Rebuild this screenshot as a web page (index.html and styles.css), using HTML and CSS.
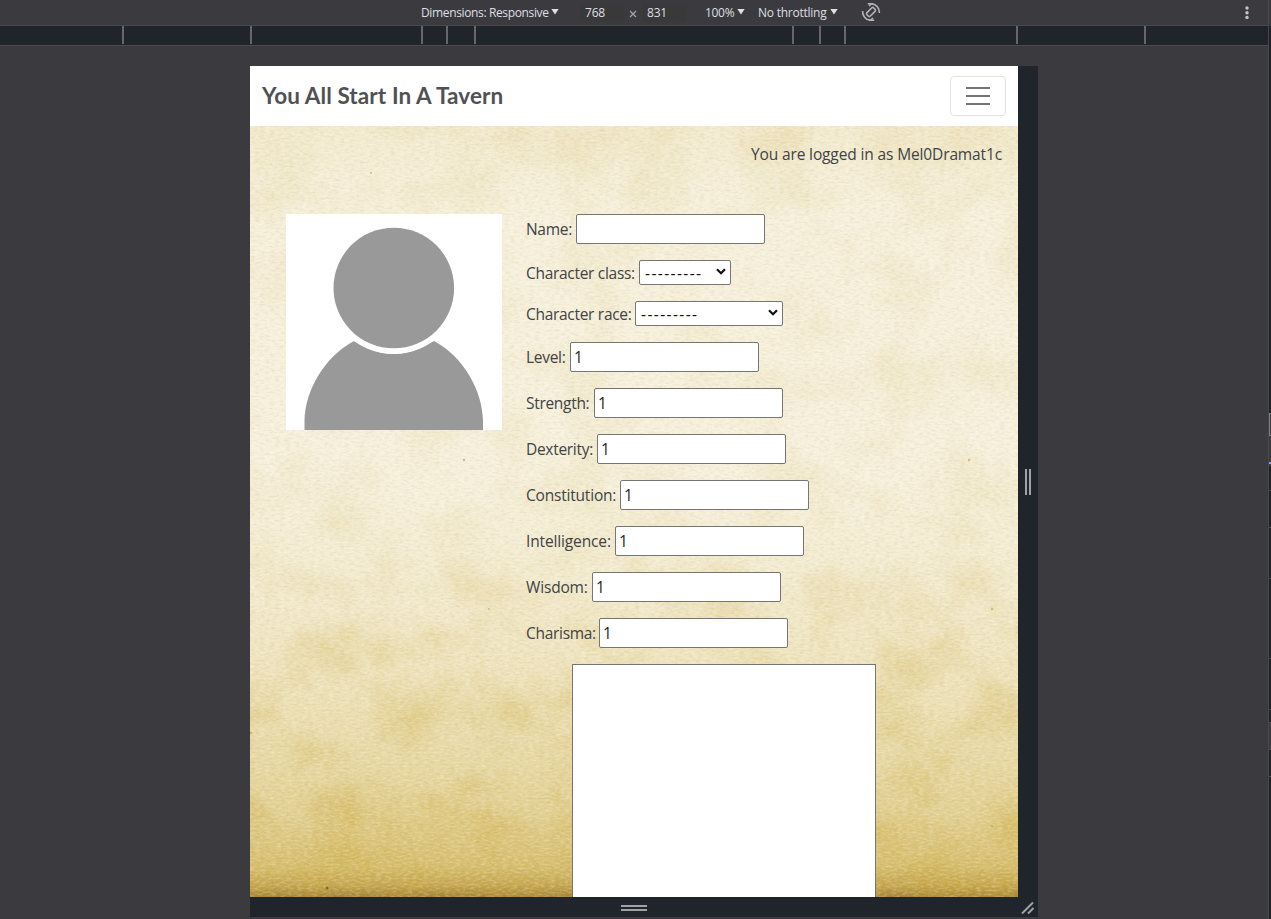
FILE: index.html
```html
<!DOCTYPE html>
<html lang="en">
<head>
<meta charset="utf-8">
<title>You All Start In A Tavern</title>
<link rel="stylesheet" href="styles.css">
</head>
<body>
<div class="device-tools">
  <header class="toolbar">
    <span class="tool dimensions">Dimensions: Responsive</span><i class="caret"></i>
    <span class="size size-w">768</span>
    <svg class="times" viewBox="0 0 8 8"><path d="M1 1l6 6M7 1L1 7"/></svg>
    <span class="size size-h">831</span>
    <span class="tool zoom">100%</span><i class="caret"></i>
    <span class="tool throttle">No throttling</span><i class="caret"></i>
    <svg class="rotate" viewBox="0 0 20 20"><g transform="rotate(45 10 10)"><rect x="7.600" y="5.200" width="4.800" height="9.600" rx="1.500"/></g><path d="M1.600 9c-.2 4.500 3 8.800 7.600 9.300M18.400 11c.2-4.500-3-8.800-7.600-9.300"/><path d="M6.800 1.800h5.200M8 18.200h5.200M8 4l3-2.500M12 16l-3 2.500"/></svg>
    <svg class="more" viewBox="0 0 4 14"><circle cx="2" cy="2" r="1.700"/><circle cx="2" cy="6.700" r="1.700"/><circle cx="2" cy="11.400" r="1.700"/></svg>
  </header>
  <svg class="ruler" viewBox="0 0 1268 19"><path d="M123 0v18M251 0v18M422 0v18M447 0v18M475 0v18M793 0v18M820 0v18M845 0v18M1017 0v18M1145 0v18"/></svg>
  <div class="stage">
    <div class="viewport">
      <nav class="navbar">
        <span class="brand">You All Start In A Tavern</span>
        <button class="menu" aria-label="Menu"><i></i><i></i><i></i></button>
      </nav>
      <main class="parchment">
        <svg class="paper" width="768" height="771" preserveAspectRatio="none">
          <defs>
            <linearGradient id="tone" x1="0" y1="0" x2="0" y2="1">
              <stop offset="0" stop-color="#f3ebd0"/><stop offset=".12" stop-color="#f7f1de"/><stop offset=".45" stop-color="#f7f1de"/><stop offset=".6" stop-color="#f3ebcf"/><stop offset=".76" stop-color="#ecdfb3"/><stop offset=".89" stop-color="#e2d092"/><stop offset=".96" stop-color="#d6bd6c"/><stop offset=".985" stop-color="#c5a64f"/><stop offset="1" stop-color="#a38234"/>
            </linearGradient>
            <linearGradient id="fade" x1="0" y1="0" x2="0" y2="1">
              <stop offset="0" stop-color="#555"/><stop offset=".15" stop-color="#333"/><stop offset=".5" stop-color="#3a3a3a"/><stop offset=".9" stop-color="#ddd"/>
            </linearGradient>
            <mask id="age"><rect width="768" height="771" fill="url(#fade)"/></mask>
            <filter id="grain" x="0" y="0" width="100%" height="100%" color-interpolation-filters="sRGB">
              <feTurbulence type="fractalNoise" baseFrequency=".2 .5" numOctaves="3" seed="6"/>
              <feColorMatrix values="0 0 0 0 .64  0 0 0 0 .51  0 0 0 0 .22  1.500 0 0 0 -.61"/>
            </filter>
            <filter id="light" x="0" y="0" width="100%" height="100%" color-interpolation-filters="sRGB">
              <feTurbulence type="fractalNoise" baseFrequency=".19 .5" numOctaves="3" seed="18"/>
              <feColorMatrix values="0 0 0 0 1  0 0 0 0 1  0 0 0 0 .95  1.800 0 0 0 -.72"/>
            </filter>
            <filter id="stains" x="0" y="0" width="100%" height="100%" color-interpolation-filters="sRGB">
              <feTurbulence type="fractalNoise" baseFrequency=".016 .018" numOctaves="6" seed="23"/>
              <feColorMatrix values="0 0 0 0 .8  0 0 0 0 .67  0 0 0 0 .25  1.900 0 0 0 -.8"/>
            </filter>
          </defs>
          <rect width="768" height="771" fill="url(#tone)"/>
          <g mask="url(#age)"><rect width="768" height="771" filter="url(#stains)" opacity=".6"/></g>
          <rect width="768" height="771" filter="url(#grain)" opacity=".18"/>
          <rect width="768" height="771" filter="url(#light)" opacity=".35"/>
          <g fill="#caa94a" opacity=".7"><circle cx="121" cy="47" r="1"/><circle cx="214" cy="334" r="1.300"/><circle cx="719" cy="334" r="1.300"/><circle cx="742" cy="483" r="1.200"/><circle cx="742" cy="700" r="1.300"/><circle cx="1" cy="607" r="1.500"/><circle cx="239" cy="483" r="1"/><circle cx="495" cy="699" r="1.200"/><circle cx="77" cy="762" r="1.500" fill="#71521c"/></g>
        </svg>
        <div class="content">
          <p class="login">You are logged in as Mel0Dramat1c</p>
          <div class="columns">
            <svg class="avatar" viewBox="0 0 216 216"><rect width="216" height="216" fill="#fff"/><path d="M18.500 216V207C19 177 38 143 68 127Q108 153 148 127C178 143 196.500 177 197 207V216Z" fill="#999"/><circle cx="107.500" cy="74" r="66" fill="#fff"/><circle cx="107.800" cy="74" r="60.300" fill="#999"/></svg>
            <form class="sheet">
              <label class="row name"><span>Name:</span><input type="text"></label>
              <label class="row class"><span>Character class:</span><div class="select"><b>---------</b><svg viewBox="0 0 10 7"><path d="M1 1.200l4 4 4-4"/></svg></div></label>
              <label class="row race"><span>Character race:</span><div class="select"><b>---------</b><svg viewBox="0 0 10 7"><path d="M1 1.200l4 4 4-4"/></svg></div></label>
              <label class="row level"><span>Level:</span><input type="text" value="1"></label>
              <label class="row strength"><span>Strength:</span><input type="text" value="1"></label>
              <label class="row dexterity"><span>Dexterity:</span><input type="text" value="1"></label>
              <label class="row constitution"><span>Constitution:</span><input type="text" value="1"></label>
              <label class="row intelligence"><span>Intelligence:</span><input type="text" value="1"></label>
              <label class="row wisdom"><span>Wisdom:</span><input type="text" value="1"></label>
              <label class="row charisma"><span>Charisma:</span><input type="text" value="1"></label>
              <textarea class="story"></textarea>
            </form>
          </div>
        </div>
      </main>
    </div>
    <div class="rail rail-right"><svg viewBox="0 0 6 26" width="6" height="26"><path d="M1 0v26M5 0v26"/></svg></div>
    <div class="rail rail-bottom"><svg viewBox="0 0 26 6" width="26" height="6"><path d="M0 1h26M0 5h26"/></svg></div>
    <div class="rail corner"><svg viewBox="0 0 14 14" width="14" height="14"><path d="M1 12.500L12 1.500M7 12.500l5.500-5.500"/></svg></div>
  </div>
  <svg class="edge" viewBox="0 0 3 919"><path d="M1 26h2v893H1z" fill="#202124"/><path d="M0 0h1v919H0z" fill="#48484c"/><path d="M1 413h2v53H1zM1 722h2v28H1z" fill="#3b3b3f"/><path d="M1 413.500h2M1.500 413v23M1 435.500h2" stroke="#808084" fill="none"/><path d="M1 490.500h2M1 527.500h2M1 578.500h2M1 658.500h2M1 709.500h2M1 722.500h2M1 749.500h2M1 776.500h2" stroke="#4b4b4f"/><path d="M1 462h2v2H1z" fill="#7da7e8"/></svg>
</div>
</body>
</html>
```
FILE: styles.css
```css
* { box-sizing: border-box; }
body { margin: 0; overflow: hidden; background: #3b3b3f; font-family: "Open Sans", "Noto Sans", sans-serif; }
svg { display: block; flex: none; }
.device-tools { display: grid; grid-template: 26px 20px 873px / 1268px 3px; width: 1271px; height: 919px; }
.toolbar { display: flex; align-items: center; padding-left: 421px; border-bottom: 1px solid #4a4a4d; color: #dedfe2; font-size: 12px; white-space: nowrap; }
.edge { grid-column: 2; grid-row: 1 / 4; width: 3px; height: 919px; }
.tool { flex: none; }
.dimensions { width: 130px; letter-spacing: -.36px; }
.zoom { width: 32px; letter-spacing: -.3px; }
.throttle { width: 72px; letter-spacing: -.24px; }
.caret { flex: none; width: 8px; height: 6px; margin-top: -2px; background: #dedfe2; clip-path: polygon(0 0, 100% 0, 50% 100%); }
.size { flex: none; height: 18px; line-height: 18px; background: #3a3939; letter-spacing: -.2px; }
.size-w { width: 44px; margin-left: 21px; padding-left: 5px; }
.times { width: 8px; height: 8px; margin: 3px 5px 0; stroke: #a5a7aa; stroke-width: 1.2; }
.size-h { width: 45px; padding-left: 5px; margin-right: 18px; }
.toolbar .throttle { margin-left: 13px; }
.rotate { width: 20px; height: 20px; margin: -1px 0 0 23px; fill: none; stroke: #b4b5b8; stroke-width: 1.6; }
.more { width: 4px; height: 14px; margin: 0 19px 0 auto; fill: #c5c6c9; }
.ruler { width: 1268px; height: 20px; background: #20242b; border-bottom: 1px solid #4a4a4d; stroke: #66676a; stroke-width: 2; }
.stage { display: grid; grid-template: 831px 20px / 768px 20px; padding: 20px 0 0 250px; align-content: start; }
.viewport { width: 768px; height: 831px; overflow: hidden; }
.navbar { display: flex; align-items: center; justify-content: space-between; height: 60px; padding: 0 12px; background: #fff; }
.brand { color: #505154; font: 700 22.5px/30px Lato, sans-serif; letter-spacing: .1px; }
.menu { display: flex; flex-direction: column; align-items: center; justify-content: center; gap: 6px; width: 56px; height: 40px; padding: 0; border: 1px solid #e3e3e3; border-radius: 4px; background: #fff; }
.menu i { width: 24px; height: 2px; background: #747474; }
.parchment { display: grid; height: 771px; overflow: hidden; }
.paper, .content { grid-area: 1 / 1; }
.content { z-index: 1; padding: 16px 16px 0 36px; color: #3e4346; font-size: 15.5px; font-weight: 400; line-height: 24px; letter-spacing: -.3px; }
.login { margin: 0 0 48px; text-align: right; letter-spacing: -.13px; }
.columns { display: flex; gap: 24px; }
.avatar { width: 216px; height: 216px; }
.sheet { display: flex; flex-direction: column; gap: 16px; }
.row { display: flex; height: 30px; white-space: nowrap; line-height: 31px; }
.row span { flex: none; }
.row input { width: 189px; height: 30px; padding: 1px 3px; border: 1px solid #767676; border-radius: 2px; background: #fff; color: #222; font: inherit; outline: 0; }
.row.class, .row.race { height: 25px; line-height: 26px; }
.select { display: flex; align-items: center; justify-content: space-between; height: 25px; padding: 0 4px 0 5px; border: 1px solid #767676; border-radius: 2px; background: #fff; color: #111; }
.select b { font-weight: 400; letter-spacing: 1.4px; line-height: 22px; }
.select svg { width: 10px; height: 7px; margin-top: -2px; fill: none; stroke: #111; stroke-width: 2.2; }
.class .select { width: 92px; }
.race .select { width: 148px; }
.name span { width: 50px; }
.class span { width: 113px; }
.race span { width: 109px; }
.level span { width: 44px; }
.strength span { width: 68px; }
.dexterity span { width: 71px; }
.constitution span { width: 94px; letter-spacing: -.2px; }
.intelligence span { width: 89px; letter-spacing: -.14px; }
.wisdom span { width: 66px; letter-spacing: -.16px; }
.charisma span { width: 73px; }
.story { width: 304px; height: 260px; margin: 0 0 0 46px; border: 1px solid #767676; background: #fff; resize: none; }
.rail { display: flex; align-items: center; justify-content: center; background: #20242b; }
.rail svg { fill: none; stroke: #a0a3a4; stroke-width: 2; }
.rail-bottom { padding-top: 2px; }
.corner svg { margin-top: 1px; }
```
